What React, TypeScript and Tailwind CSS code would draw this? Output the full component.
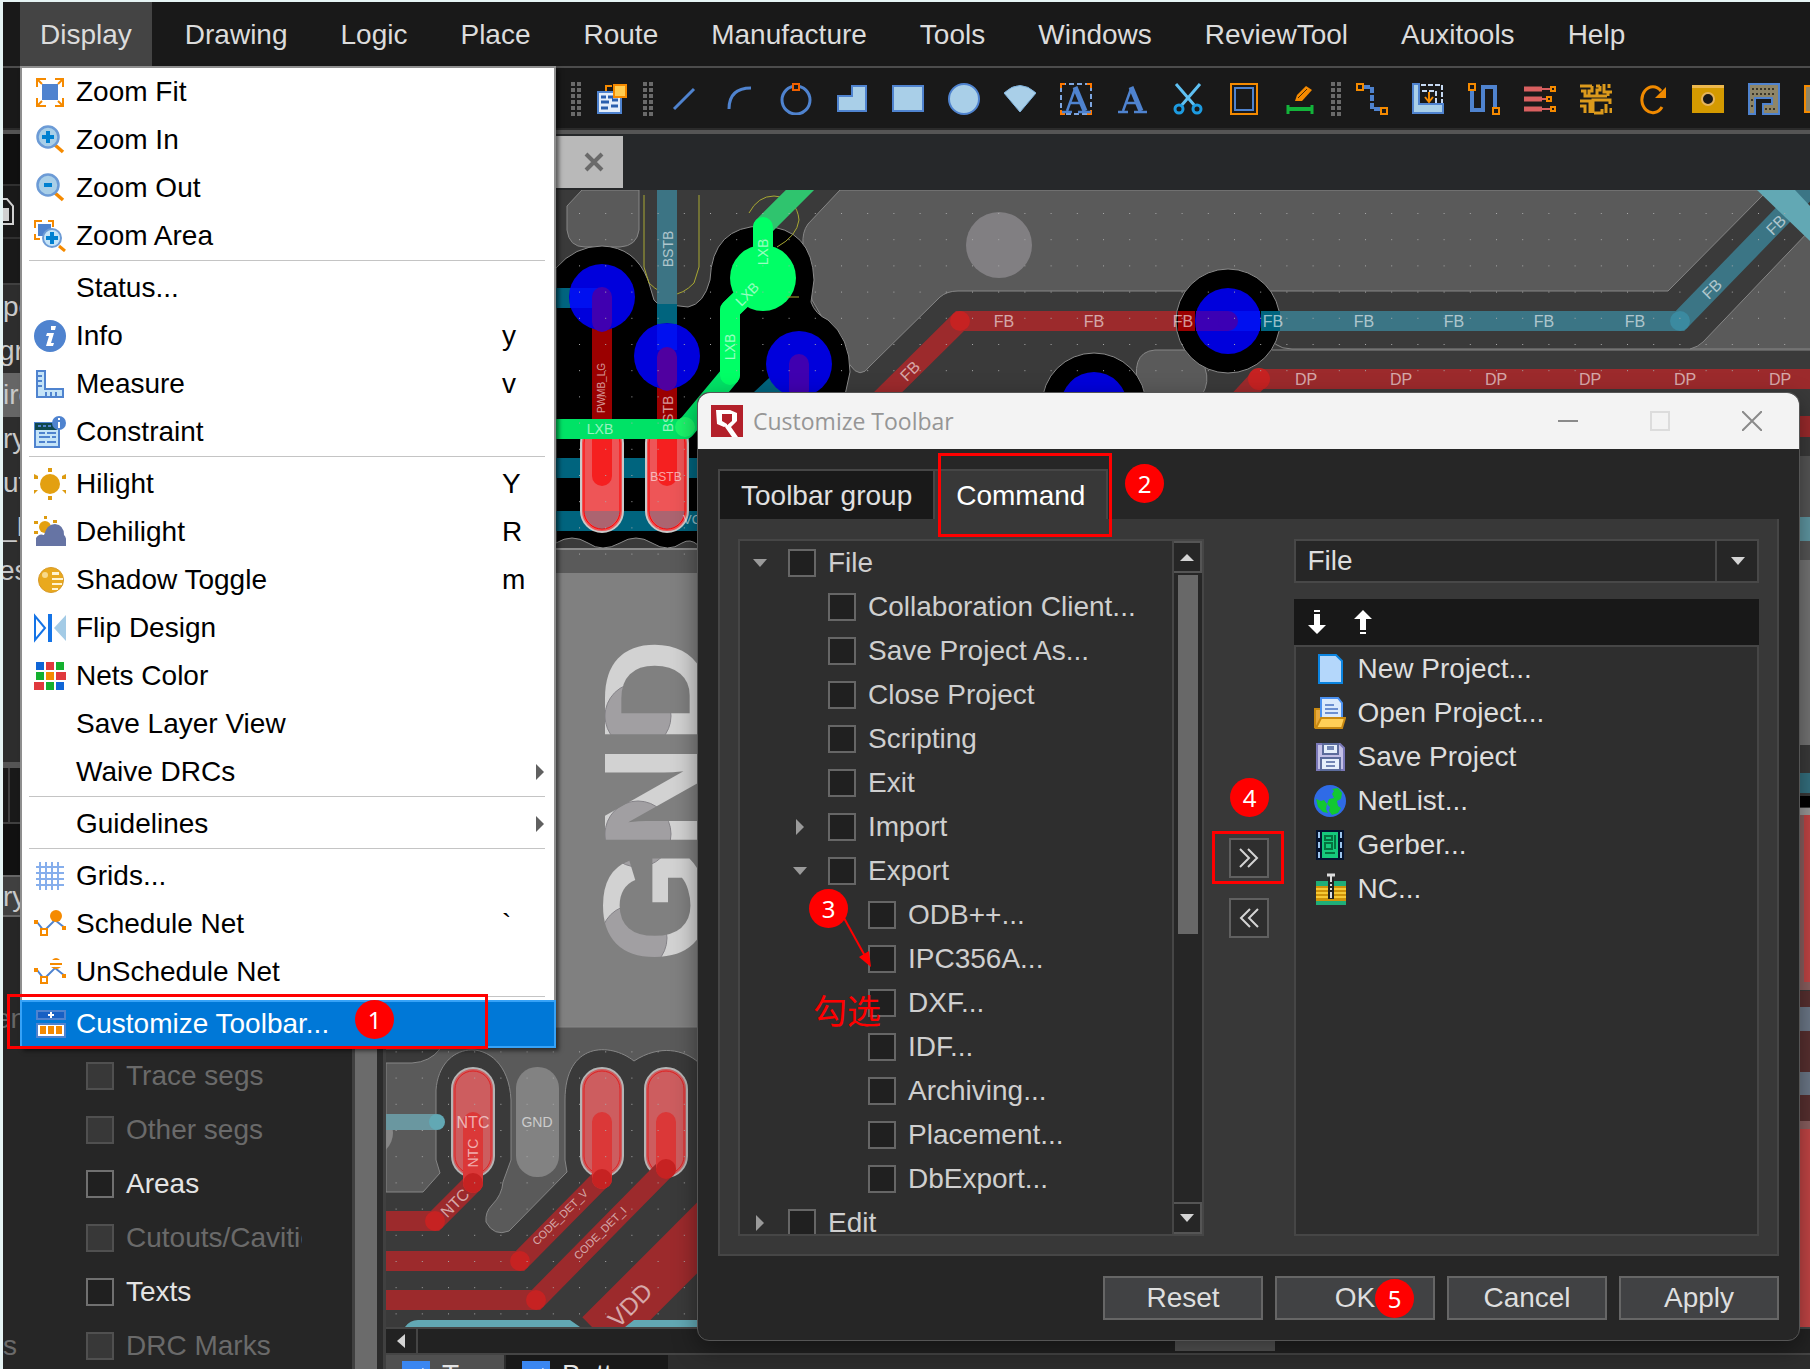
import { useState } from "react";
import type { ReactNode } from "react";
import clsx from "clsx";

const BLUE = "#4f83cf";
const SKY = "#a9cfe8";
const ORANGE = "#f58a00";

function Icon({ children, className = "h-8 w-8" }: { children?: ReactNode; className?: string }) {
  return (
    <svg viewBox="0 0 32 32" className={clsx("shrink-0", className)} fill="none" aria-hidden="true">
      {children}
    </svg>
  );
}

function Lens({ plus = false }: { plus?: boolean }) {
  return (
    <>
      <path d="M21 21l8 7" stroke={ORANGE} strokeWidth="3.5" />
      <circle cx="14" cy="13" r="10.5" fill={SKY} stroke="#6c9bd6" strokeWidth="2.5" />
      <path d={plus ? "M8 13h12M14 7v12" : "M10 13h8"} stroke="#0080d0" strokeWidth="4" />
    </>
  );
}

function NetPath({ erased = false }: { erased?: boolean }) {
  return (
    <>
      <path d="M3 14l7 9 11-11 10 8" stroke={BLUE} strokeWidth="2" />
      <path d="M0 12h4v4H0zM28 18h4v4h-4z" fill={ORANGE} />
      <path d="M7 21h6v6H7z" fill="#fff" stroke={ORANGE} strokeWidth="2" />
      {erased ? (
        <path d="M18 4q4-4 8 0zM16 7h12v2H16zM17 11h10q-5 4-10 0z" fill={ORANGE} />
      ) : (
        <circle cx="22" cy="8" r="6" fill={ORANGE} />
      )}
    </>
  );
}

const menuIcons: Record<string, ReactNode> = {
  fit: (
    <>
      <path d="M3 11V3h9M21 3h8v8M29 22v8h-8M12 30H3v-8M3 3l5 5M29 3l-5 5M29 30l-5-5M3 30l5-5" stroke={ORANGE} strokeWidth="2" />
      <path d="M8 8h16v16H8z" fill={BLUE} />
    </>
  ),
  zoomIn: <Lens plus />,
  zoomOut: <Lens />,
  area: (
    <>
      <path d="M1 8V1h7M14 1h5v6M1 14v5h5" stroke={ORANGE} strokeWidth="2" />
      <path d="M4 4h13v12H4z" fill={BLUE} />
      <path d="M25 26l6 5" stroke={ORANGE} strokeWidth="3" />
      <circle cx="18" cy="18" r="9" fill="#c5e4f8" stroke="#6c9bd6" strokeWidth="2" />
      <path d="M12 18h12M18 12v12" stroke="#0080d0" strokeWidth="4" />
    </>
  ),
  info: (
    <>
      <circle cx="16" cy="16" r="16" fill={BLUE} />
      <path d="M17 6h5l-1 4h-4zM13 13h7l-3 10h3l-1 3h-7l3-10h-3z" fill="#fff" />
    </>
  ),
  measure: (
    <>
      <path d="M3 3h8v18h18v8H3z" fill="#c5e4f8" stroke={BLUE} strokeWidth="2" />
      <path d="M4 8h4M4 13h4M4 18h4M12 28v-4M17 28v-4M22 28v-4" stroke={BLUE} strokeWidth="2" />
    </>
  ),
  constraint: (
    <>
      <path d="M1 7h24v24H1z" fill="#c5e4f8" stroke={BLUE} strokeWidth="2" />
      <path d="M1 7h22v7H1z" fill="#10484e" />
      <path d="M4 10h3M9 10h3M14 10h3M5 17h6M13 17h9M5 21h11M18 21h4M5 26h6M13 26h9" stroke={BLUE} strokeWidth="2" />
      <circle cx="25" cy="7" r="7" fill={BLUE} />
      <path d="M25 2v2M25 6v6" stroke="#fff" strokeWidth="2" />
    </>
  ),
  sun: (
    <>
      <circle cx="16" cy="16" r="10" fill="#e3a010" />
      <path d="M14 0h4v4h-4zM14 28h4v4h-4zM0 6l4 2v3H0zM32 6l-4 2v3h4zM0 26v-4h4zM32 26v-4h-4z" fill="#dd9b10" />
    </>
  ),
  cloud: (
    <>
      <circle cx="11" cy="11" r="6" fill="#e3a010" />
      <path d="M10 0h3v3h-3zM0 5h4v3H0zM19 4h4v3h-4zM0 15h4v3H0z" fill="#dd9b10" />
      <path d="M2 30V22q3-5 8-3Q13 8 21 8q9 1 9 11 3 2 2 11z" fill="#6674a4" />
    </>
  ),
  shadow: (
    <>
      <circle cx="17" cy="16" r="12.5" fill="#e9a91e" stroke="#d79a2a" />
      <path d="M18 8h7v3h-7zM18 14h11v2H18zM18 19h10v2H18zM18 24h6v2h-6z" fill="#fff4d0" />
      <circle cx="11" cy="11" r="3" fill="#f8d98a" />
    </>
  ),
  flip: (
    <>
      <path d="M1 4v24l10-12z" stroke="#1473e6" strokeWidth="2" />
      <path d="M14 2h4v28h-4z" fill="#1473e6" />
      <path d="M32 3v26L20 16z" fill="#a3cbe6" />
    </>
  ),
  colors: (
    <>
      <path d="M2 2h8v8H2zM22 22h8v8h-8z" fill="#0f65d6" />
      <path d="M12 2h8v8h-8zM22 12h10v8H22zM0 22h10v8H0z" fill="#e0393e" />
      <path d="M22 2h8v8h-8zM2 12h8v8H2zM12 22h8v8h-8z" fill="#14b02f" />
      <path d="M12 12h8v8h-8z" fill={ORANGE} />
    </>
  ),
  grid: <path d="M6 2v28M12 2v28M18 2v28M24 2v28M2 7h28M2 13h28M2 19h28M2 25h28" stroke="#86aeec" strokeWidth="2" />,
  schedule: <NetPath />,
  unschedule: <NetPath erased />,
  toolbar: (
    <>
      <path d="M3 3h28v8H3z" fill="#1760c4" stroke={BLUE} strokeWidth="2" />
      <path d="M14 7h6M17 4v6" stroke="#fff" strokeWidth="2" />
      <path d="M3 16h28v13H3z" fill="#fff" stroke={BLUE} strokeWidth="2" />
      <path d="M6 18h6v8H6zM14 18h6v8h-6zM22 18h6v8h-6z" fill={ORANGE} />
    </>
  ),
};

type MenuEntry = { label: string; icon?: string; shortcut?: string; submenu?: boolean };

const menuGroups: MenuEntry[][] = [
  [
    { label: "Zoom Fit", icon: "fit" },
    { label: "Zoom In", icon: "zoomIn" },
    { label: "Zoom Out", icon: "zoomOut" },
    { label: "Zoom Area", icon: "area" },
  ],
  [
    { label: "Status..." },
    { label: "Info", icon: "info", shortcut: "y" },
    { label: "Measure", icon: "measure", shortcut: "v" },
    { label: "Constraint", icon: "constraint" },
  ],
  [
    { label: "Hilight", icon: "sun", shortcut: "Y" },
    { label: "Dehilight", icon: "cloud", shortcut: "R" },
    { label: "Shadow Toggle", icon: "shadow", shortcut: "m" },
    { label: "Flip Design", icon: "flip" },
    { label: "Nets Color", icon: "colors" },
    { label: "Save Layer View" },
    { label: "Waive DRCs", submenu: true },
  ],
  [{ label: "Guidelines", submenu: true }],
  [
    { label: "Grids...", icon: "grid" },
    { label: "Schedule Net", icon: "schedule", shortcut: "`" },
    { label: "UnSchedule Net", icon: "unschedule" },
  ],
  [{ label: "Customize Toolbar...", icon: "toolbar" }],
];

const menus = ["Display", "Drawing", "Logic", "Place", "Route", "Manufacture", "Tools", "Windows", "ReviewTool", "Auxitools", "Help"];

function DisplayMenu() {
  return (
    <div role="menu" className="absolute left-5 top-[66px] z-10 w-[536px] border-2 border-b-0 border-[#8f8f8f] bg-white text-black shadow-[3px_3px_4px_rgba(0,0,0,0.5)]">
      {menuGroups.map((group, i) => (
        <div key={i}>
          {i > 0 ? <div className="ml-[7px] mr-[9px] h-1 border-t border-[#c4c4c4]" /> : null}
          {group.map((item) => {
            const active = item.icon === "toolbar";
            return (
              <button
                key={item.label}
                type="button"
                role="menuitem"
                className={clsx(
                  "flex h-12 items-center text-left",
                  active ? "-mx-[2px] w-[536px] border-2 border-[#36a2f7] bg-[#0078d7] pl-3 text-white" : "w-full pl-3 pr-[10px]",
                )}
              >
                <Icon>{item.icon ? menuIcons[item.icon] : null}</Icon>
                <span className="ml-[10px] flex-1">{item.label}</span>
                <span className="w-[34px]">{item.shortcut}</span>
                <span className="w-2">
                  {item.submenu ? (
                    <svg viewBox="0 0 8 16" className="h-4 w-2" aria-hidden="true">
                      <path d="M0 0l8 8-8 8z" fill="#606060" />
                    </svg>
                  ) : null}
                </span>
              </button>
            );
          })}
        </div>
      ))}
    </div>
  );
}

const letterA = (
  <>
    <path d="M7 28L15 6M10 20h12" stroke={BLUE} strokeWidth="2.5" />
    <path d="M15 4l10 24" stroke={BLUE} strokeWidth="5" />
    <path d="M2 29h10M18 29h13" stroke={BLUE} strokeWidth="2.5" />
  </>
);

const drawTools: [string, ReactNode][] = [
  ["Line", <path d="M6 26L26 6" stroke={BLUE} strokeWidth="3" />],
  ["Arc", <path d="M5 26Q5 5 27 5" stroke={BLUE} strokeWidth="3" />],
  [
    "Circle",
    <>
      <circle cx="16" cy="17" r="14" stroke={BLUE} strokeWidth="3" />
      <path d="M13 1h6v6h-6z" fill="#191919" stroke="#f06000" strokeWidth="2" />
    </>,
  ],
  ["Polygon", <path d="M2 13h14V3h14v25H2z" fill={SKY} stroke={BLUE} strokeWidth="2" />],
  ["Rectangle", <path d="M1 3h30v25H1z" fill={SKY} stroke={BLUE} strokeWidth="2" />],
  ["Filled circle", <circle cx="16" cy="16" r="15" fill={SKY} stroke={BLUE} strokeWidth="2" />],
  ["Sector", <path d="M0 10Q16-5 32 10L16 29z" fill={SKY} stroke="#7fb2dd" />],
  [
    "Text frame",
    <>
      <path d="M1 1h30v30H1z" stroke="#7ea6e0" strokeWidth="2" strokeDasharray="5 3" />
      <path d="M1 5V1h4M27 1h4v4M31 27v4h-4M5 31H1v-4" stroke="#ff7800" strokeWidth="2" />
      {letterA}
    </>,
  ],
  ["Text", letterA],
  [
    "Cut",
    <>
      <path d="M4 1l19 22M28 1L9 23" stroke="#5ec0f2" strokeWidth="3" />
      <circle cx="7" cy="26" r="4" stroke="#1d9be0" strokeWidth="3" />
      <circle cx="25" cy="26" r="4" stroke="#1d9be0" strokeWidth="3" />
    </>,
  ],
  [
    "Outline",
    <>
      <path d="M3 1h26v30H3z" stroke={ORANGE} strokeWidth="2" />
      <path d="M7 5h18v22H7z" stroke={BLUE} strokeWidth="2" />
    </>,
  ],
  [
    "Edit dimension",
    <>
      <path d="M11 18l2-6 9-9 6 4-10 11z" fill={ORANGE} />
      <path d="M14 15l9-9" stroke="#4a2a00" strokeWidth="1" />
      <path d="M3 26h26" stroke="#13b33a" strokeWidth="4" />
      <path d="M4 22v9M28 22v9" stroke="#13b33a" strokeWidth="3" />
    </>,
  ],
];

const routeTools: [string, ReactNode][] = [
  [
    "Route",
    <>
      <path d="M8 4h8v22h8" stroke={BLUE} strokeWidth="4" strokeDasharray="6 2" />
      <path d="M1 1h6v6H1zM25 25h6v6h-6z" fill="#191919" stroke={ORANGE} strokeWidth="2" />
    </>,
  ],
  [
    "Push",
    <>
      <path d="M1 1h6v20h24v9H1z" fill={SKY} stroke={BLUE} strokeWidth="2" />
      <path d="M9 2h21v18M10 8h14v12" stroke="#c6d9f2" strokeWidth="2" strokeDasharray="5 2" />
      <path d="M17 9v9M13 14l4 5 4-5" stroke={ORANGE} strokeWidth="2" />
    </>,
  ],
  [
    "Tune",
    <>
      <path d="M4 8v19h11V4h12v22" stroke={BLUE} strokeWidth="4" />
      <path d="M1 1h6v6H1zM25 25h6v6h-6z" fill="#191919" stroke={ORANGE} strokeWidth="2" />
    </>,
  ],
  [
    "Fanout",
    <>
      <path d="M0 6h18M0 16h18M0 26h18" stroke="#d96060" strokeWidth="5" />
      <path d="M18 6h9M18 16h5M18 26h9" stroke="#d96060" strokeWidth="2" />
      <path d="M27 4h4v4h-4zM23 14h4v4h-4zM27 24h4v4h-4z" stroke={ORANGE} strokeWidth="2" />
    </>,
  ],
  [
    "Area route",
    <>
      <path d="M0 3h12M16 3h4M24 1v8h8M29 1v4M1 8h4v5h22M12 3v5H9v4M20 3v4h-3v5M28 13V9" stroke="#dc9a1c" strokeWidth="3" />
      <path d="M0 18h10v12M0 23h5v7M13 30V17h17v4M26 30v-9M31 25v5M14 30h8v-4" stroke="#dc9a1c" strokeWidth="3" />
    </>,
  ],
  [
    "Refresh",
    <>
      <path d="M25 8A11 13 0 1 0 26 24" stroke="#f08a00" strokeWidth="3" />
      <path d="M19 15h11V4z" fill="#f08a00" />
    </>,
  ],
  [
    "Via",
    <>
      <path d="M0 2h32v28H0z" fill="#d49a00" />
      <path d="M0 2h32v3H0z" fill="#edb84e" />
      <circle cx="16" cy="16" r="6" fill="#191919" stroke="#e5b45c" strokeWidth="2" />
    </>,
  ],
  [
    "Shape fill",
    <>
      <path d="M1 1h30v30H15V21h9v-6H7v16H1z" fill="#8f8668" stroke={BLUE} strokeWidth="2" />
      <path d="M4 6h24M4 11h24M3 17h3M3 23h3M17 26h11" stroke="#3a362a" strokeWidth="2" strokeDasharray="2 2" />
    </>,
  ],
  ["Shape void", <path d="M1 3h30v26H1z" fill="#8f8668" stroke={ORANGE} strokeWidth="2" />],
];

function Grip() {
  return (
    <span className="flex w-4 shrink-0 justify-center" aria-hidden="true">
      <svg viewBox="0 0 10 34" className="h-[34px] w-[10px]">
        <path d="M2 0v34M8 0v34" stroke="#6a6a6a" strokeWidth="4" strokeDasharray="4 2" />
      </svg>
    </span>
  );
}

function ToolButton({ label, children }: { label: string; children: ReactNode }) {
  return (
    <button type="button" title={label} aria-label={label} className="flex w-14 shrink-0 items-center justify-center">
      <Icon>{children}</Icon>
    </button>
  );
}

function Toolbar() {
  return (
    <div className="flex h-[60px] shrink-0 items-center overflow-hidden bg-[#191919] pl-[565px] pt-px">
      <Grip />
      <ToolButton label="Placement">
        <path d="M2 9h23v21H2z" fill="#e4eefb" stroke={BLUE} strokeWidth="2" />
        <path d="M5 14h5M12 14h5M5 19h8M16 17h6M5 25h7M15 23h7" stroke="#2a5fae" strokeWidth="3" />
        <path d="M10 8V3h6" stroke={ORANGE} strokeWidth="2" />
        <path d="M18 2h12v12H18z" fill="#ffcc50" stroke={ORANGE} strokeWidth="2" />
      </ToolButton>
      <Grip />
      {drawTools.map(([label, art]) => (
        <ToolButton key={label} label={label}>
          {art}
        </ToolButton>
      ))}
      <Grip />
      {routeTools.map(([label, art]) => (
        <ToolButton key={label} label={label}>
          {art}
        </ToolButton>
      ))}
    </div>
  );
}

const boxClass = "m-0 h-7 w-7 shrink-0 appearance-none border-2";

const filters = [
  { label: "Trace segs", enabled: false },
  { label: "Other segs", enabled: false },
  { label: "Areas", enabled: true },
  { label: "Cutouts/Cavities", enabled: false },
  { label: "Texts", enabled: true },
  { label: "DRC Marks", enabled: false },
];

// the list is scrolled sideways, so some names start left of the panel
const layers = [
  { name: "po", shift: "" },
  { name: "gr", shift: "-indent-1" },
  { name: "iro", shift: "" },
  { name: "ry", shift: "" },
  { name: "ut", shift: "" },
  { name: "_D", shift: "-indent-[2px]" },
  { name: "es", shift: "-indent-1" },
];

function Sidebar() {
  return (
    <aside className="flex w-[383px] shrink-0 bg-[#262626] text-[#c8c8c8]">
      <div className="flex min-w-0 flex-1 flex-col">
        <div className="h-[50px] shrink-0 bg-[#101010]" />
        <div className="flex h-[55px] shrink-0 items-center border-y-2 border-[#303030] bg-[#191919]">
          <svg viewBox="0 0 12 30" className="h-[30px] w-3" aria-hidden="true">
            <path d="M0 2h4l6 7v18H0" fill="none" stroke="#d0d0d0" strokeWidth="2" />
            <path d="M0 11h6v13H0z" fill="#d0d0d0" />
          </svg>
        </div>
        <div className="h-11 shrink-0 bg-[#191919]" />
        <ul className="h-[479px] shrink-0 overflow-hidden border-t-2 border-[#404040] bg-[#2d2d2d]">
          {layers.map(({ name, shift }) => (
            <li key={name} className={clsx("h-11 leading-[44px]", shift, name === "iro" && "bg-[#666]")}>
              {name}
            </li>
          ))}
        </ul>
        <div className="h-[60px] shrink-0 border-t-[6px] border-[#555] bg-[#191919] pl-[5px]">
          <div className="h-full border-l-2 border-[#404040]" />
        </div>
        <div className="h-[53px] shrink-0 border-t-2 border-[#404040] bg-[#111]" />
        <div className="h-[42px] shrink-0 border-2 border-l-0 border-[#666] bg-[#404040] leading-[40px]">ry</div>
        <div className="h-[132px] shrink-0 overflow-hidden pt-[86px] -indent-2 text-[#666]">en</div>
        <div className="relative">
          <ul>
            {filters.map(({ label, enabled }) => (
              <li key={label} className="flex h-[54px] items-center">
                <label className={clsx("ml-[83px] flex w-[216px] items-center gap-3 overflow-hidden whitespace-nowrap", enabled ? "text-[#e4e4e4]" : "text-[#6a6a6a]")}>
                  <input
                    type="checkbox"
                    disabled={!enabled}
                    className={clsx(boxClass, enabled ? "border-[#707070] bg-[#202020]" : "border-[#505050] bg-[#383838]")}
                  />
                  {label}
                </label>
              </li>
            ))}
          </ul>
          <span className="absolute bottom-0 left-0 leading-[54px] text-[#6a6a6a]">s</span>
        </div>
      </div>
      <div className="w-[34px] border-x-[3px] border-[#404040] bg-[#6b6b6b]">
        <div className="ml-auto h-full w-[6px] bg-[#2b2b2b]" />
      </div>
    </aside>
  );
}

function Via({ x, y, halo = false }: { x: number; y: number; halo?: boolean }) {
  return (
    <>
      {halo ? <circle cx={x} cy={y} r="52" fill="#000" stroke="#8a8a8a" /> : null}
      <circle cx={x} cy={y} r="33" fill="#0000dc" />
    </>
  );
}

function NetLabel({ x, y, text, angle = 0, size = 16 }: { x: number; y: number; text: string; angle?: number; size?: number }) {
  return (
    <text x={x} y={y} fontSize={size} textAnchor="middle" dominantBaseline="central" fill="#fff" fillOpacity="0.6" transform={angle ? `rotate(${angle} ${x} ${y})` : undefined}>
      {text}
    </text>
  );
}

function Board() {
  return (
    <svg viewBox="386 190 1424 1137" preserveAspectRatio="xMinYMin slice" className="min-h-0 w-full flex-1" fontFamily="'Liberation Sans', Arial, sans-serif" aria-label="Board view">
      <defs>
        <pattern id="dots" x="579" y="213" width="26.2" height="26.2" patternUnits="userSpaceOnUse">
          <path d="M0 0h1v1H0z" fill="#aaa" />
        </pattern>
        <clipPath id="gnd-text">
          <text transform="translate(706 963) rotate(-90)" fontSize="146" fontWeight="700">
            GND
          </text>
        </clipPath>
      </defs>
      <path d="M386 190h1424v1137H386z" fill="#3a3a3a" />

      {/* copper pours */}
      <g fill="#5a5a5a" stroke="#868686">
        <path d="M582 190L567 206V230Q569 247 585 247H620Q637 246 639 230V190Z" />
        <path d="M840 190L808 224Q802 232 803 245L812 300 850 365Q860 380 870 366L940 297Q947 291 958 291H1668L1768 190Z" />
        <path d="M1690 349H1811V229L1703 342Q1698 347 1690 349Z" />
        <path d="M1155 350H1185L1205 368Q1210 382 1202 395H1140Q1128 352 1155 350Z" />
      </g>
      <path d="M1266 330Q1272 349 1292 349H1690M1272 350H1810" stroke="#868686" fill="none" />

      <path d="M556 268Q575 246 602 246 635 247 648 280L654 300Q656 304 662 304L688 307Q704 304 710 280 712 226 763 226 812 228 814 280L811 302Q815 314 828 320 850 338 850 372L845 395V545H698Q690 538 682 543 668 553 652 543 636 533 620 543 602 553 588 543 572 533 556 543Z" fill="#000" stroke="#8a8a8a" />
      <circle cx="999" cy="245" r="33" fill="#817f82" />

      {/* silkscreen arcs */}
      <g fill="none" stroke="#a8a832">
        <path d="M644 195V267L649 283Q672 306 694 283L699 267V195" />
        <path d="M749 213Q758 196 774 196 797 198 799 220 797 236 777 247" />
      </g>

      {/* bottom side tracks */}
      <g fill="none" strokeWidth="20" stroke="#00647e">
        <path d="M667 190V304" stroke="#3c7484" />
        <path d="M667 304V345M556 298H602M556 468H698M556 521H698M760 400L799 364" />
        <path d="M1228 321H1280" />
        <path d="M1280 321H1680L1811 186" stroke="#3b7585" />
      </g>
      <circle cx="1680" cy="321" r="10" fill="#3b8aa0" />
      <path d="M1757 190H1795L1811 207V242Z" fill="#62a8b4" />

      {/* top side tracks */}
      <g fill="none" strokeWidth="20" stroke="#9c2a2c">
        <path d="M870 410L960 321H1180M1235 405L1259 379H1810" />
        <path d="M602 297V430M667 356V430" stroke="#9b0000" />
      </g>
      <circle cx="960" cy="321" r="10" fill="#c62222" />
      <circle cx="1259" cy="379" r="11" fill="#c62222" />

      <Via x={1228} y={321} halo />
      <path d="M1178 321H1195" stroke="#9b0000" strokeWidth="20" />
      <path d="M1261 321H1280" stroke="#00647e" strokeWidth="20" />
      <path d="M1228 321H1260" stroke="#0010f0" strokeWidth="20" />
      <path d="M1196 321H1228" stroke="#3c00b4" strokeWidth="20" />
      <circle cx="1228" cy="321" r="10" fill="#3c00b4" />
      <Via x={1094} y={405} halo />
      <Via x={602} y={297} />
      <Via x={667} y={356} />
      <Via x={799} y={364} />
      <path d="M570 298H600" stroke="#0010f0" strokeWidth="20" />
      <path d="M667 324V350" stroke="#0010f0" strokeWidth="20" />
      <path d="M602 297V322M799 364V390" stroke="#4000b0" strokeWidth="20" strokeLinecap="round" />
      <path d="M667 357V381" stroke="#5000a0" strokeWidth="20" strokeLinecap="round" />

      {/* pads */}
      {[602, 667].map((x) => (
        <g key={x}>
          <rect x={x - 21} y="422" width="42" height="110" rx="21" fill="#ee5557" stroke="#c9c9c9" strokeWidth="2" />
          <rect x={x - 18} y="425" width="36" height="104" rx="18" fill="none" stroke="#f00" />
          <path d={`M${x} 436V476`} stroke="#f52020" strokeWidth="20" strokeLinecap="round" />
          <path d={`M${x - 18} 511h36q-4 16-18 18-14-2-18-18`} fill="#3080a0" fillOpacity="0.35" />
        </g>
      ))}

      {/* highlighted net */}
      <g fill="none" strokeWidth="20" stroke="#00e266" strokeLinejoin="round">
        <path d="M806 184L763 227" stroke="#2fc46e" strokeLinecap="round" />
        <path d="M763 227V278L730 310V375L685 429H556" />
        <path d="M763 227V278L730 310V375" stroke="#00ff66" strokeLinecap="round" />
      </g>
      <circle cx="763" cy="278" r="33" fill="#00ff66" />
      <path d="M787 297H799" stroke="#a8a832" />
      <circle cx="685" cy="427" r="10" fill="#1bf56a" />

      {/* ground pad */}
      <path d="M556 548H698V573H556zM556 1027H698V1050H556z" fill="#5a5a5a" />
      <path d="M556 549H698" stroke="#8a8a8a" strokeWidth="2" />
      <path d="M386 573H698V1027H386z" fill="#808080" />
      <g clipPath="url(#gnd-text)">
        <path d="M590 600H720V990H590z" fill="#d2d2d2" />
        <g fill="#a19fa2" stroke="#858388">
          <circle cx="638" cy="716" r="33" />
          <circle cx="638" cy="834" r="33" />
          <circle cx="634" cy="938" r="33" />
        </g>
      </g>

      {/* lower left area */}
      <path
        d="M386 1027H698V1062C684 1050 660 1044 634 1061 610 1042 565 1042 565 1100V1160L567 1172 509 1231Q494 1237 486 1222 485 1212 492 1205 502 1195 503 1182L511 1160V1100C508 1035 440 1035 436 1090V1160L440 1173 423 1192H386V1063H412Q430 1062 440 1049H386Z"
        fill="#5a5a5a"
        stroke="#868686"
      />
      <circle cx="370" cy="1133" r="23" fill="#868686" />
      <path d="M386 1122H436" stroke="#6a97a0" strokeWidth="16" />
      <circle cx="437" cy="1122" r="8" fill="#62a8b4" />
      <rect x="516" y="1067" width="43" height="110" rx="21" fill="#828282" />
      {[473, 602, 666].map((x) => (
        <g key={x}>
          <rect x={x - 21} y="1068" width="42" height="109" rx="21" fill="#cd5d5f" stroke="#b4b4b4" strokeWidth="2" />
          <rect x={x - 18} y="1071" width="36" height="103" rx="18" fill="none" stroke="#e02020" />
        </g>
      ))}
      <g fill="none" stroke="#9c2a2c" strokeWidth="20">
        <path d="M473 1183L435 1221H386M602 1178L520 1261H386M666 1168L536 1300H386" />
        <path d="M720 1215L600 1335" strokeWidth="50" />
      </g>
      <path d="M473 1122V1183M602 1122V1179M666 1122V1168" stroke="#db3838" strokeWidth="20" strokeLinecap="round" />
      <g fill="#c62222">
        <circle cx="473" cy="1183" r="10" />
        <circle cx="435" cy="1221" r="10" />
        <circle cx="602" cy="1179" r="10" />
        <circle cx="520" cy="1261" r="10" />
        <circle cx="666" cy="1169" r="10" />
        <circle cx="536" cy="1300" r="10" />
      </g>
      <path d="M405 1327Q410 1320 418 1320H570L580 1327ZM625 1327L634 1320H698V1327Z" fill="#62a8b4" />

      {/* strip at the right edge */}
      <g>
        <path d="M1796 416h14v21h-14z" fill="#9c2a2c" />
        <path d="M1796 456h14v104h-14z" fill="#555" />
        <path d="M1796 517h14v24h-14z" fill="#5f97a2" />
        <path d="M1796 560h14v185h-14z" fill="#747474" />
        <path d="M1796 773h14v20h-14z" fill="#34707f" />
        <path d="M1796 796h14v11h-14z" fill="#000" />
        <path d="M1796 808h14v7h-14z" fill="#999" />
        <path d="M1796 815h14v175h-14zM1796 1121h14v8h-14z" fill="#8b6060" />
        <path d="M1804 815h6v167h-6zM1796 1129h14v198h-14z" fill="#c34545" />
        <path d="M1796 991h14v130h-14z" fill="#583030" />
        <path d="M1796 1007h14v24h-14zM1796 1072h14v23h-14z" fill="#6c7888" />
      </g>

      <path d="M386 190h1424v383H386zM386 1050h1424v277H386z" fill="url(#dots)" />

      {[1004, 1094, 1183, 1273, 1364, 1454, 1544, 1635].map((x) => (
        <NetLabel key={x} x={x} y={321} text="FB" />
      ))}
      {[1306, 1401, 1496, 1590, 1685, 1780].map((x) => (
        <NetLabel key={x} x={x} y={379} text="DP" />
      ))}
      <NetLabel x={910} y={371} text="FB" angle={-45} />
      <NetLabel x={1712} y={289} text="FB" angle={-45} />
      <NetLabel x={1776} y={225} text="FB" angle={-45} />
      <NetLabel x={668} y={249} text="BSTB" angle={-90} size={14} />
      <NetLabel x={668} y={414} text="BSTB" angle={-90} size={14} />
      <NetLabel x={601} y={388} text="PWMB_LG" angle={-90} size={10} />
      <NetLabel x={763} y={252} text="LXB" angle={-90} size={14} />
      <NetLabel x={747} y={294} text="LXB" angle={-45} size={14} />
      <NetLabel x={730} y={347} text="LXB" angle={-90} size={14} />
      <NetLabel x={600} y={429} text="LXB" size={14} />
      <NetLabel x={666} y={477} text="BSTB" size={12} />
      <NetLabel x={692} y={519} text="VC" size={13} />
      <NetLabel x={473} y={1122} text="NTC" />
      <NetLabel x={473} y={1153} text="NTC" angle={-90} size={14} />
      <NetLabel x={537} y={1122} text="GND" size={14} />
      <NetLabel x={455} y={1203} text="NTC" angle={-45} />
      <NetLabel x={560} y={1217} text="CODE_DET_V" angle={-45} size={11} />
      <NetLabel x={600} y={1233} text="CODE_DET_I" angle={-45} size={11} />
      <NetLabel x={630} y={1305} text="VDD" angle={-45} size={24} />
    </svg>
  );
}

function TickBox() {
  return (
    <svg viewBox="0 0 28 28" className="h-7 w-7" aria-hidden="true">
      <path d="M0 0h28v28H0z" fill="#3a86f0" />
      <path d="M7 14l5 5 10-11" fill="none" stroke="#fff" strokeWidth="3" />
    </svg>
  );
}

function Workspace() {
  return (
    <main className="flex min-w-0 flex-1 flex-col">
      <div className="h-14 shrink-0 bg-[#26282a] pt-[2px]">
        <div className="flex h-[52px] w-[237px] items-center justify-end bg-[#b9b9b9] pr-[19px]">
          <button type="button" aria-label="Close tab" className="flex h-5 w-5 items-center justify-center">
            <svg viewBox="0 0 20 20" className="h-5 w-5" aria-hidden="true">
              <path d="M2 2l16 16M18 2L2 18" stroke="#6a6a6a" strokeWidth="4" />
            </svg>
          </button>
        </div>
      </div>
      <Board />
      <div className="flex h-7 shrink-0 border-y-2 border-[#454545] bg-[#222]">
        <button type="button" aria-label="Scroll left" className="flex w-8 items-center justify-center border-r-2 border-[#454545]">
          <svg viewBox="0 0 8 14" className="h-[14px] w-2" aria-hidden="true">
            <path d="M8 0v14L0 7z" fill="#d4d4d4" />
          </svg>
        </button>
        <div className="ml-[757px] mt-[2px] h-5 w-[100px] bg-[#555]" />
      </div>
      <div className="flex h-[14px] shrink-0 gap-[2px] overflow-hidden bg-[#2d2d2d] text-[#e4e4e4]">
        <button type="button" className="flex h-10 w-[118px] items-center gap-3 bg-[#505050] pl-4">
          <TickBox />
          Top
        </button>
        <button type="button" className="flex h-10 w-[162px] items-center gap-3 bg-[#191919] pl-4">
          <TickBox />
          Bottom
        </button>
      </div>
    </main>
  );
}

type TreeNode = { label: string; level: 0 | 1 | 2; open?: boolean };

const tree: TreeNode[] = [
  { label: "File", level: 0, open: true },
  { label: "Collaboration Client...", level: 1 },
  { label: "Save Project As...", level: 1 },
  { label: "Close Project", level: 1 },
  { label: "Scripting", level: 1 },
  { label: "Exit", level: 1 },
  { label: "Import", level: 1, open: false },
  { label: "Export", level: 1, open: true },
  { label: "ODB++...", level: 2 },
  { label: "IPC356A...", level: 2 },
  { label: "DXF...", level: 2 },
  { label: "IDF...", level: 2 },
  { label: "Archiving...", level: 2 },
  { label: "Placement...", level: 2 },
  { label: "DbExport...", level: 2 },
  { label: "Edit", level: 0, open: false },
];

const indents = ["pl-0", "pl-10", "pl-20"];

const commands: [string, ReactNode][] = [
  ["New Project...", <path d="M5 2h17l6 6v22H5z" fill="#b4d7fb" stroke="#0a84e0" strokeWidth="2" />],
  [
    "Open Project...",
    <>
      <path d="M1 12h8v18H1z" fill="#e8a93c" stroke="#c98a12" strokeWidth="2" />
      <path d="M7 1h17l4 5v18H7z" fill="#dceafc" stroke="#4a90f0" strokeWidth="2" />
      <path d="M11 8h9M11 12h13M11 16h13" stroke="#6d8fd0" strokeWidth="2" />
      <path d="M7 21h24l-3 10H2z" fill="#ffcf57" stroke="#c98a12" strokeWidth="2" />
    </>,
  ],
  [
    "Save Project",
    <>
      <path d="M3 3h23l4 4v22H3z" fill="#c3c0e6" stroke="#7a78b8" strokeWidth="2" />
      <path d="M9 3h15v10H9zM7 17h19v12H7z" fill="#e6f0fb" stroke="#5c6c9c" strokeWidth="2" />
      <path d="M13 5h7v4h-7z" fill="#7286b4" />
      <path d="M12 21h9M12 25h9" stroke="#7286b4" strokeWidth="2" />
    </>,
  ],
  [
    "NetList...",
    <>
      <circle cx="16" cy="16" r="16" fill="#2f6be6" />
      <path d="M18 4l6-1 4 5-1 6-4 2 1 5 3 2-3 5-6 2-3-4 1-4-3-3 2-5 5-1-2-4 2-3z" fill="#12c832" />
      <path d="M2 14l5 2 3-1 3 4-1 5 2 4-5-1-5-5z" fill="#12c832" />
    </>,
  ],
  [
    "Gerber...",
    <>
      <path d="M2 1h28v30H2z" fill="#04132e" />
      <path d="M5 3v27M27 3v27" stroke="#9cc4ee" strokeWidth="2" strokeDasharray="6 4" />
      <path d="M8 3h16v26H8z" fill="#16c97c" />
      <path d="M11 7h7v4h-7zM11 14h7v6h-7zM11 24h10M21 6v14" stroke="#04713e" strokeWidth="2" />
    </>,
  ],
  [
    "NC...",
    <>
      <path d="M2 8h30v24H2z" fill="#1fae78" />
      <path d="M2 13h30v15H2z" fill="#cf9308" />
      <path d="M2 16h30M2 20h30M2 24h30" stroke="#f6c935" strokeWidth="2" />
      <path d="M14 5h6v21h-6z" fill="#222" />
      <path d="M13 2h8" stroke="#ddd" strokeWidth="3" />
      <path d="M17 3v22" stroke="#ddd" strokeWidth="2" strokeDasharray="6 2 2 2 2 2" />
    </>,
  ],
];

function Caret({ dir, className = "fill-[#9a9a9a]" }: { dir: "up" | "down" | "right"; className?: string }) {
  const d = dir === "up" ? "M2 13h14L9 6z" : dir === "down" ? "M2 5h14l-7 8z" : "M5 1v16l8-8z";
  return (
    <svg viewBox="0 0 18 18" className={clsx("h-[18px] w-[18px]", className)} aria-hidden="true">
      <path d={d} />
    </svg>
  );
}

function CommandTree() {
  return (
    <div className="flex min-h-0 min-w-0 overflow-hidden border-2 border-[#464646] bg-[#2e2e2e]">
      <ul className="h-0 min-w-0 flex-1 text-[#cfcfcf]">
        {tree.map((node) => (
          <li key={node.label} className={clsx("flex h-11 items-center", indents[node.level])}>
            <span className="flex w-10 justify-center">
              {node.open === undefined ? null : (
                <button type="button" aria-label={`Toggle ${node.label}`}>
                  <Caret dir={node.open ? "down" : "right"} />
                </button>
              )}
            </span>
            <label className="ml-2 flex items-center gap-3 whitespace-nowrap">
              <input type="checkbox" className={clsx(boxClass, "border-[#666] bg-[#202020] checked:bg-[#3a86f0]")} />
              {node.label}
            </label>
          </li>
        ))}
      </ul>
      <div className="flex w-[30px] flex-col border-l-2 border-[#464646] bg-[#262626]">
        <button type="button" aria-label="Scroll up" className="flex h-8 items-center justify-center border-2 border-l-0 border-[#555]">
          <Caret dir="up" className="fill-[#d4d4d4]" />
        </button>
        <div className="mx-1 mt-[2px] h-[359px] bg-[#686868]" />
        <button type="button" aria-label="Scroll down" className="mt-auto flex h-8 items-center justify-center border-2 border-l-0 border-[#555]">
          <Caret dir="down" className="fill-[#d4d4d4]" />
        </button>
      </div>
    </div>
  );
}

function MoveButton({ label, d }: { label: string; d: string }) {
  return (
    <button type="button" aria-label={label} className="flex h-10 w-10 items-center justify-center border-2 border-[#606060] bg-[#2e2e2e]">
      <svg viewBox="0 0 20 20" className="h-5 w-5" aria-hidden="true">
        <path d={d} fill="none" stroke="#d4d4d4" strokeWidth="2" />
      </svg>
    </button>
  );
}

function Badge({ n, className }: { n: number; className: string }) {
  return (
    <span className={clsx("absolute z-30 flex h-[39px] w-[39px] items-center justify-center rounded-full bg-[#f00] font-['Noto_Sans','Noto_Sans_CJK_SC',sans-serif] text-2xl text-white", className)}>
      {n}
    </span>
  );
}

function CustomizeDialog() {
  const [tab, setTab] = useState("Command");

  return (
    <div role="dialog" aria-label="Customize Toolbar" className="absolute left-[697px] right-[10px] top-[392px] z-20 flex h-[949px] flex-col rounded-xl border border-[#555] bg-[#262626] shadow-[0_8px_24px_rgba(0,0,0,0.4)]">
      <div className="flex h-14 shrink-0 items-center rounded-t-xl bg-[#f3f3f3] pl-[13px] pr-[27px] text-[#969696]">
        <svg viewBox="0 0 32 32" className="h-8 w-8" aria-hidden="true">
          <path d="M0 0h32v32H0z" fill="#b3202a" />
          <path d="M5 5h14l7 3v8l-6 6 7 10h-6l-7-10 7-6V9H11v7l5 3v2l-3 1-7-3Z" fill="#fff" />
        </svg>
        <span className="ml-[10px] font-['Open_Sans','Noto_Sans',sans-serif] text-[23px]">Customize Toolbar</span>
        <div className="ml-auto flex items-center gap-[52px]">
          {[
            ["Minimize", "M0 10h20", "stroke-[#8a8a8a]"],
            ["Maximize", "M1 1h18v18H1z", "stroke-[#dcdcdc]"],
            ["Close", "M0 0l20 20M20 0L0 20", "stroke-[#8a8a8a]"],
          ].map(([label, d, stroke]) => (
            <button key={label} type="button" aria-label={label} className="flex h-10 w-10 items-center justify-center pb-px">
              <svg viewBox="0 0 20 20" className={clsx("h-5 w-5 fill-none stroke-2", stroke)} aria-hidden="true">
                <path d={d} />
              </svg>
            </button>
          ))}
        </div>
      </div>

      <div className="flex min-h-0 flex-1 flex-col px-5 pb-5 pt-5">
        <div role="tablist" className="flex shrink-0">
          {["Toolbar group", "Command"].map((name) => (
            <button
              key={name}
              type="button"
              role="tab"
              aria-selected={tab === name}
              onClick={() => setTab(name)}
              className={clsx("h-[50px] border-2 border-b-0 border-[#464646] px-[21px] pt-px", tab === name ? "border-l-0 bg-[#383838] text-white" : "bg-[#191919] text-[#e0e0e0]")}
            >
              {name}
            </button>
          ))}
        </div>
        <div className="grid min-h-0 flex-1 grid-cols-[1fr_90px_1fr] border-2 border-t-0 border-[#464646] bg-[#383838] px-[18px] pb-[18px] pt-5">
          <CommandTree />
          <div className="flex flex-col items-center justify-center gap-5">
            <MoveButton label="Add" d="M1 1l9 9-9 9M9 1l9 9-9 9" />
            <MoveButton label="Remove" d="M11 1l-9 9 9 9M19 1l-9 9 9 9" />
          </div>
          <div className="flex min-w-0 flex-col text-[#dedede]">
            <div className="relative">
              <select aria-label="Toolbar group" className="block h-11 w-full appearance-none rounded-none border-2 border-[#484848] bg-[#262626] pl-3">
                <option>File</option>
              </select>
              <span className="pointer-events-none absolute inset-y-0 right-0 flex w-[44px] items-center justify-center border-l-2 border-[#484848]">
                <Caret dir="down" className="fill-[#d4d4d4]" />
              </span>
            </div>
            <div className="mt-4 flex h-[46px] shrink-0 items-center gap-7 bg-[#181818] pl-[14px]">
              <button type="button" aria-label="Move down">
                <svg viewBox="0 0 18 24" className="h-6 w-[18px]" aria-hidden="true">
                  <path d="M6 0h6v2H6zM6 4h6v11h6l-9 9-9-9h6z" fill="#fff" />
                </svg>
              </button>
              <button type="button" aria-label="Move up">
                <svg viewBox="0 0 18 24" className="h-6 w-[18px]" aria-hidden="true">
                  <path d="M6 22h6v2H6zM6 20h6V9h6L9 0 0 9h6z" fill="#fff" />
                </svg>
              </button>
            </div>
            <ul className="flex-1 border-2 border-[#464646] bg-[#2e2e2e]">
              {commands.map(([label, art]) => (
                <li key={label} className="flex h-11 items-center gap-3 pl-[18px]">
                  <Icon>{art}</Icon>
                  {label}
                </li>
              ))}
            </ul>
          </div>
        </div>
        <div className="mt-5 flex shrink-0 justify-end gap-3">
          {["Reset", "OK", "Cancel", "Apply"].map((name) => (
            <button key={name} type="button" className="h-11 w-40 border-2 border-[#666] bg-[#414244] text-[#dedede]">
              {name}
            </button>
          ))}
        </div>
      </div>
    </div>
  );
}

function Callouts() {
  return (
    <>
      <div className="pointer-events-none absolute left-[7px] top-[994px] z-30 h-[55px] w-[481px] border-[3px] border-[#f00]" />
      <Badge n={1} className="left-[355px] top-[1000px]" />
      <div className="pointer-events-none absolute left-[938px] top-[453px] z-30 h-[84px] w-[174px] border-[3px] border-[#f00]" />
      <Badge n={2} className="left-[1125px] top-[464px]" />
      <Badge n={3} className="left-[809px] top-[889px]" />
      <svg viewBox="0 0 32 52" className="pointer-events-none absolute left-[842px] top-[916px] z-30 h-[52px] w-8" aria-hidden="true">
        <path d="M2 2l21 38" stroke="#f00" strokeWidth="2" />
        <path d="M17 41l10-6 2 16z" fill="#f00" />
      </svg>
      <span className="absolute left-[813px] top-[986px] z-30 font-['Noto_Sans_CJK_SC',sans-serif] text-[34px] leading-[48px] text-[#f00]">勾选</span>
      <Badge n={4} className="left-[1230px] top-[778px]" />
      <div className="pointer-events-none absolute left-[1212px] top-[831px] z-30 h-[53px] w-[72px] border-[3px] border-[#f00]" />
      <Badge n={5} className="left-[1375px] top-[1279px]" />
    </>
  );
}

export default function App() {
  return (
    <div className="relative flex h-screen flex-col overflow-hidden bg-[#e6f4f4] pl-[3px] pt-[2px] font-['Liberation_Sans',Arial,sans-serif] text-[28px] leading-8">
      <nav className="flex h-[66px] shrink-0 gap-[13px] border-b-2 border-[#4c4c4c] bg-[#191919] pl-[17px] text-[#dcdcdc]">
        {menus.map((name) => (
          <button key={name} type="button" className={clsx("px-5 pt-px", name === "Display" && "bg-[#444]")}>
            {name}
          </button>
        ))}
      </nav>
      <Toolbar />
      <div className="h-[6px] shrink-0 border-t-2 border-[#2b2b2b] bg-[#555]" />
      <div className="flex min-h-0 flex-1">
        <Sidebar />
        <Workspace />
      </div>
      <DisplayMenu />
      <CustomizeDialog />
      <Callouts />
    </div>
  );
}
